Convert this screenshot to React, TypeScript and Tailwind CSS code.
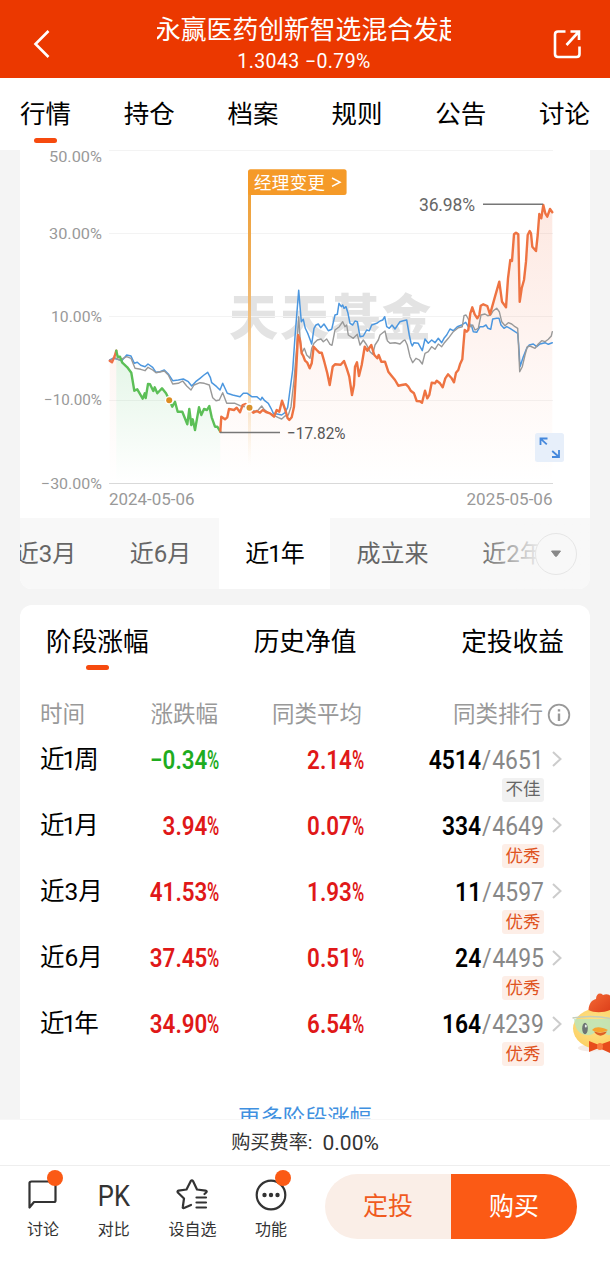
import { useState } from 'react'

const navTabs = ['行情', '持仓', '档案', '规则', '公告', '讨论']

const axisLabels = [
  { text: '50.00%', y: 162, x: 49 },
  { text: '30.00%', y: 238.5, x: 49 },
  { text: '10.00%', y: 321.5, x: 51 },
  { text: '−10.00%', y: 405, x: 44 },
  { text: '−30.00%', y: 488.5, x: 41 },
]

const periods = [
  { text: '近3月', box: 'w-[103px] -ml-[20px] pr-[12px]', narrow: false },
  { text: '近6月', box: 'w-[116px] pr-px', narrow: false },
  { text: '近1年', box: 'w-[111px]', narrow: true },
  { text: '成立来', box: 'w-[125px]', narrow: false },
  { text: '近2年', box: 'w-[116px]', narrow: false },
]

const stages = [
  { name: '近1周', change: '-0.34', avg: '2.14', rank: '4514', total: '4651', level: '不佳' },
  { name: '近1月', change: '3.94', avg: '0.07', rank: '334', total: '4649', level: '优秀' },
  { name: '近3月', change: '41.53', avg: '1.93', rank: '11', total: '4597', level: '优秀' },
  { name: '近6月', change: '37.45', avg: '0.51', rank: '24', total: '4495', level: '优秀' },
  { name: '近1年', change: '34.90', avg: '6.54', rank: '164', total: '4239', level: '优秀' },
]

// chart series, in chart viewBox units
const startLine = '109.7,360.7 112,362.3 114.7,356 116.3,350.7'

const greenLine =
  '116.3,350.7 117.7,356.7 120,356.7 122.3,362.7 127.3,367.3 131.3,372.7 134.3,390.7 137.3,389.3 142.7,398.7 144.7,393.3 145.7,398 148,384 150,384.3 153.3,391 154.7,387.3 157.3,393.3 162,388.3 166,393.3 169.3,400 172.3,406.7 175,401.7 177.7,411.7 182.3,411.7 187.3,424.3 189.3,409 191.3,425 192.7,419.3 195,430 199,407.3 201.3,415 204,409 207,410 209.3,406 211.7,417.3 215,426.7 217.3,426.7 220.3,431.7'

const fundLine =
  '220.3,431.7 221.3,416.7 225,419.3 227.3,417.3 229,409 234,410 236.7,407.7 240,412.3 242.7,405 245.3,404 249.3,407.7 253.3,412.7 256.7,411 260,412.7 262.7,410 266,412 270,413.3 274,416.7 276.7,410 279.3,411.7 282,400.7 285.3,410 287.7,418.3 289.3,420 291.7,417.3 294,406.7 296,373.3 298,335 300,340 301.7,353.3 303.3,356 305,360.7 307.3,362.7 309.7,368.3 311.7,363.3 313.7,346.7 316.7,350 319.3,352.7 321.7,352.7 324.3,361.7 327.3,373.3 329.7,385 332.7,366.7 335,364.3 340.7,364.7 344,361 346.7,368.3 349.3,376.7 352,395 354,385 355,366.7 357,362.3 359,376 361.7,365 364.7,346.7 367.3,350.7 371.3,345 374.3,355 377.3,358.3 378.7,355 381.3,361.7 385,361.7 388.3,371.7 391.7,376 395,380 398.3,385.7 401.7,385 406,384.3 408.3,386.7 410.7,390.7 414,393.3 416.7,401 420,401.3 422,402.7 425,390.7 427.3,398.3 429.3,395 431.7,382.7 435,383.3 436.7,380.7 440,383.3 442.7,387.3 445.3,378.3 448,374.3 451.7,378.3 454,382.3 456,372.7 458.3,370 460,364.3 462.3,359.3 463.3,346.7 464.7,330 466.7,331.7 468.3,330 470.3,313.3 472.3,307.3 474.7,314.3 477.3,318.3 479.3,315 480.7,305.7 483.3,304.3 487.3,306 490,314.3 491.7,308.3 495,296.7 499.3,281.7 502,301.7 506,307.3 508,278.3 510.3,260 512,261 514,234.3 516,232.7 518.3,234.3 519.7,301.7 521.7,288.3 524,280 526,261.7 527.7,235 529.7,231 531,233.3 532.3,246.7 536,251 537.7,235 539.3,214 541.3,218.3 543.3,205 545.3,213.3 547.3,216.7 550,209 552.3,212.3'

const blueLine =
  '109.7,360 113.3,358.3 117.7,359.3 121.7,360.7 126.7,355 131,356 134.3,363.3 137.3,362.3 140.7,365.3 145,366.7 148,364 152.7,367.3 156,372.3 160,371.7 164.3,370 168.3,374 172.7,380.7 178.3,380 183.3,379 188.3,381.7 191.7,386 195.7,381.7 200,378.3 204,375 207.7,372.3 210.3,377.3 211.7,382.7 216.7,386.7 220,390 222.7,383.3 227.3,393.3 232.7,395 240,396.7 243.3,393.3 247.3,393.3 251.7,396.7 256.7,396.7 260.7,400 262,397.3 264.7,400.7 268.3,403.3 271,408.3 273.3,413.3 278.3,414.3 281.7,415 285,412.7 287.7,407.3 290,390 292.7,370 295,336.7 298.7,290.3 301.3,321.7 303.3,319.3 305.3,328.3 307.7,333.3 311.7,344 314,328.3 316,325 318.3,324 320.7,327.7 324,324 328.3,330.7 331.7,329.3 335,315 337.3,314.3 339,303.3 341.3,306.7 342.7,305 344,308.3 346,306.7 348,313.3 350,323.3 352.7,325 355,321 357.3,321.7 360,336.7 363.3,336 366.7,330 369.3,330.7 371.7,325 376.7,323.3 380,321 382.7,320 384.7,316.7 386.7,326.7 389.3,328.3 392,325 395,329 400,321.7 403.3,320.7 406.7,320 409.3,335 411,343 412.3,346 414,342.7 418.3,343.3 422.3,350.7 425,339 428.3,343.3 431.7,340 435,342.7 438.3,338.3 441.7,342.7 444,338.3 446.7,335 450,329 453.3,330.7 457.3,326.7 461.7,325 465.7,322.3 468.3,326.7 471.3,325 473.3,331.7 476.7,332.3 480,326.7 483.3,326.7 486,325 488,328.3 490.7,329.3 492.7,319 496.7,318.3 499,318.3 501,325 504,328.3 506.7,326.7 510,328.3 515,331.7 517.7,333.3 518.7,345 520,366.7 523.3,356.7 526.7,348.3 529.3,345 533.3,344 536.7,346.7 540,344 545,342.7 548.3,344.3 552.3,342.7'

const grayLine =
  '109.7,360.7 115,358 120,360 126.7,356.7 131,358.3 135,368.3 140.7,369.3 145,370.7 148,367.3 152.7,370 156,372.7 164.3,371 168.3,375 172.7,384 178.3,383.3 182.7,381 186.7,386 191,390 194,385 200,382.7 204.3,383.3 209.3,385 212.7,397.7 216,400.7 219.3,400 222.7,392.7 226.7,403.3 235,403.3 240,405.7 245,406.7 251.7,410 256.7,411.7 261.7,406 264,409.3 268.3,412.7 273.3,415 278.3,417.7 281.7,419 285,416 288.3,415 291,406.7 294,380 296.7,346.7 298.7,316.7 300,336.7 301.7,353.3 304.3,348.3 306.7,355 310,358.3 311.7,348.3 314,343.3 317.3,340 321,339 323.3,341.7 326.7,339 330,344.3 332,345.3 335,330 337.3,328.3 339.3,326.7 342.7,321.7 345,326.7 346.7,325 348.3,335 353.3,338.3 357.3,334.3 360,345 363.3,340 366.7,345 370,351.7 372.7,354.3 375,345 378.3,340 380,335 385,331 387.3,340.7 390,343.3 395,342.7 400,344 403.3,340.7 405,340 407.3,345 410,356.7 412.7,362.7 416,358.3 419.3,360 422.3,364 425,353.3 428.3,351.7 431.7,346.7 435,349.3 438.3,344 441.7,346.7 444,343.3 448.3,338.3 453.3,331.7 458.3,327.7 462.3,326.7 464,315.7 466,315 468.3,319 470.7,326.7 472.7,325 475,330 478.3,328.3 481,315 485,314 487.7,315.7 490.7,315 493.3,310.7 496.7,308.3 499.3,311.7 501.7,321.7 505,325.7 508.3,322.7 511.7,324 515,326.7 517.7,328.3 519.7,371.7 522.3,366.7 525,355 527.3,346.7 530,346 535,348.3 538.3,344 541.7,340.7 545,341.7 548.3,339.3 551.3,336 552.3,331.7'

function TrendChart() {
  return (
    <svg viewBox="20 150 570 368" className="block h-[368px] w-full font-['Roboto','Noto_Sans_CJK_SC',sans-serif]">
      <defs>
        <linearGradient id="fundArea" gradientUnits="userSpaceOnUse" x1="0" y1="205" x2="0" y2="483">
          <stop offset="0" stopColor="#f2683a" stopOpacity="0.15" />
          <stop offset="0.6" stopColor="#f2683a" stopOpacity="0.055" />
          <stop offset="1" stopColor="#f2683a" stopOpacity="0" />
        </linearGradient>
        <linearGradient id="greenArea" gradientUnits="userSpaceOnUse" x1="0" y1="350" x2="0" y2="483">
          <stop offset="0" stopColor="#4fc064" stopOpacity="0.16" />
          <stop offset="1" stopColor="#4fc064" stopOpacity="0" />
        </linearGradient>
        <linearGradient id="managerLine" gradientUnits="userSpaceOnUse" x1="0" y1="180" x2="0" y2="465">
          <stop offset="0" stopColor="#ef9f33" />
          <stop offset="0.3" stopColor="#efad58" />
          <stop offset="0.75" stopColor="#f6d3a2" stopOpacity="0.8" />
          <stop offset="1" stopColor="#fae3c4" stopOpacity="0" />
        </linearGradient>
      </defs>

      {/* watermark */}
      <text x="229" y="335" fontSize="49" fontWeight="900" fill="#e3e3e3" textLength="202">天天基金</text>

      {[150.5, 233.5, 316.5, 400.5].map((y) => (
        <line key={y} x1="109" x2="553" y1={y} y2={y} stroke="#f3f3f3" />
      ))}
      <line x1="109" x2="553" y1="483.5" y2="483.5" stroke="#d9d9d9" />

      <polygon points={`109.7,483 ${startLine} 116.3,483`} fill="url(#fundArea)" />
      <polygon points={`116.3,483 ${greenLine} 220.3,483`} fill="url(#greenArea)" />
      <polygon points={`220.3,483 ${fundLine} 552.3,483`} fill="url(#fundArea)" />

      <rect x="248" y="180" width="3" height="285" fill="url(#managerLine)" />

      <g fill="none" strokeLinejoin="round" strokeLinecap="round">
        <polyline points={blueLine} stroke="#4c97df" strokeWidth="1.5" />
        <polyline points={grayLine} stroke="#999" strokeWidth="1.4" />
        <polyline points={startLine} stroke="#ee7048" strokeWidth="2.4" />
        <polyline points={greenLine} stroke="#5cbf57" strokeWidth="2.4" />
        <polyline points={fundLine} stroke="#ee7342" strokeWidth="2.4" />
      </g>

      <circle cx="169.2" cy="400.3" r="4.3" fill="#fff" />
      <circle cx="169.2" cy="400.3" r="3" fill="#dc8c22" />
      <circle cx="249.5" cy="407.7" r="4.8" fill="#fff" />
      <circle cx="249.5" cy="407.7" r="3" fill="#d8922b" />

      <path d="M220 432.5H280M483 204.2H543" stroke="#777" strokeWidth="1.6" />
      <text x="419" y="210.5" fontSize="17.5" fill="#666" textLength="56">36.98%</text>
      <text x="287" y="439" fontSize="17" fill="#555" textLength="58.5" lengthAdjust="spacingAndGlyphs">−17.82%</text>

      <rect x="248" y="169.3" width="98.6" height="25.6" rx="2.5" fill="#f59a28" />
      <text x="254" y="188.5" fontSize="17.5" fill="#fff" textLength="71">经理变更</text>
      <path d="M332 178l8 4.2l-8 4.2" fill="none" stroke="#fff" strokeWidth="1.5" />

      {axisLabels.map((l) => (
        <text key={l.text} x={l.x} y={l.y} fontSize="15.5" fill="#999" textLength={102 - l.x} lengthAdjust="spacingAndGlyphs">
          {l.text}
        </text>
      ))}
      <text x="109" y="505" fontSize="15.6" fill="#999" textLength="85.5" lengthAdjust="spacingAndGlyphs">2024-05-06</text>
      <text x="466.5" y="505" fontSize="15.6" fill="#999" textLength="86" lengthAdjust="spacingAndGlyphs">2025-05-06</text>

      {/* fullscreen button */}
      <rect x="535" y="433" width="29" height="29" rx="2.5" fill="#e7effa" />
      <path d="M540.5 445v-6.5h7M540.8 438.8l6 5.5M559 450v7h-7M558.7 456.7l-6.5-5.7" fill="none" stroke="#4588dc" strokeWidth="1.8" />
    </svg>
  )
}

function Mascot() {
  return (
    <svg viewBox="0 0 38 64" className="h-[64px] w-[38px]">
      <defs>
        <radialGradient id="chick" cx="0.45" cy="0.4" r="0.6">
          <stop offset="0" stopColor="#ffe58d" />
          <stop offset="1" stopColor="#fbcf62" />
        </radialGradient>
        <linearGradient id="comb" x1="0" y1="0" x2="1" y2="1">
          <stop offset="0" stopColor="#f56a35" />
          <stop offset="1" stopColor="#dc3f1a" />
        </linearGradient>
      </defs>
      <ellipse cx="20" cy="57" rx="14" ry="3.5" fill="#f3ebe6" />
      <ellipse cx="27" cy="37.5" rx="26" ry="20.5" fill="url(#chick)" />
      <path d="M16.5 19C17 12 20 9 24 8C24 3 28 1 31 4C35 2.500 38 4 38 5V19C31 22 22 22 16.5 19Z" fill="url(#comb)" />
      <path d="M2 28H38V44C34 45 32 40 28 40C22 40 22 45 14 44C7 43 3 38 2 28Z" fill="#b3e6c1" fillOpacity="0.75" />
      <path d="M0.5 27C10 25 26 24.5 38 27.5" fill="none" stroke="#c5cfbb" strokeWidth="1.5" />
      <ellipse cx="13" cy="37.5" rx="2.8" ry="5.8" fill="#6d7474" />
      <ellipse cx="13.8" cy="35" rx="1" ry="1.6" fill="#e9efec" />
      <path d="M20 39C24 35 29 36 36 39C32 42 24 42 20 39Z" fill="#f6a32e" />
      <path d="M22 40.5C26 42 30 42 35 40.5C32 46 25 46 22 40.5Z" fill="#de6126" />
      <path d="M17 50L27 54L38 50V62L27 57L17 61Z" fill="#e74c1c" />
      <ellipse cx="28" cy="55.5" rx="3" ry="3.5" fill="#f97a3d" />
    </svg>
  )
}

function Percent({ value, className }: { value: string, className: string }) {
  return (
    <span className={`origin-right scale-x-[0.86] pt-[10.5px] text-right text-[26px] leading-[36px] font-semibold whitespace-nowrap ${className}`}>
      {value.replace('-', '−')}
      <span className="-ml-[5px] inline-block origin-right scale-x-[0.74]">%</span>
    </span>
  )
}

function BottomItem({ label, dot, children }: { label: string, dot?: boolean, children: any }) {
  return (
    <div className="relative flex flex-col items-center">
      <div className="flex h-[32px] w-[32px] items-center justify-center">{children}</div>
      {dot && <span className="absolute top-[-9px] right-[-4px] h-4 w-4 rounded-full bg-[#fb5a15]" />}
      <span className="mt-[7px] text-[16px] leading-[24px] whitespace-nowrap">{label}</span>
    </div>
  )
}

export default function App() {
  const [tab, setTab] = useState('行情')
  const [period, setPeriod] = useState('近1年')

  return (
    <div className="relative flex h-[1263px] w-[610px] flex-col overflow-hidden bg-[#f4f4f4] font-['Roboto','Noto_Sans_CJK_SC',sans-serif] text-black">
      <header className="flex h-[78px] shrink-0 items-center justify-between bg-[#eb3800] px-[28px] pt-[10px] text-white">
        <svg viewBox="0 0 28 34" className="h-[34px] w-[28px]" fill="none" stroke="currentColor" strokeWidth="2.6">
          <path d="M20.5 4L7.5 17L20.5 30" />
        </svg>
        <div className="-mt-[3px] flex flex-col items-center">
          <h1 className="w-[294px] overflow-hidden text-[25.8px] leading-[36px] whitespace-nowrap">
            <span className="-ml-[2px]">永赢医药创新智选混合发起</span>
          </h1>
          <p className="mt-[2px] -mb-px text-[19.5px] leading-6 tracking-[0.4px]">1.3043 −0.79%</p>
        </div>
        <svg viewBox="0 0 30 34" className="h-[34px] w-[30px]" fill="none" stroke="currentColor" strokeWidth="2.6">
          <path d="M13.5 4.5H6Q3 4.5 3 7.5V27Q3 30 6 30H24.5Q27.5 30 27.5 27V19.5" />
          <path d="M14.5 18L26.5 5M18.5 4.5H27V13" />
        </svg>
      </header>

      <nav className="flex h-[72px] shrink-0 justify-between bg-white px-5">
        {navTabs.map((t) => (
          <button key={t} onClick={() => setTab(t)} className="flex flex-col items-center pt-[18px]">
            <span className="text-[25.5px] leading-[36px]">{t}</span>
            {t === tab && <span className="mt-[5.5px] h-[5px] w-[23px] rounded-full bg-[#f64a0e]" />}
          </button>
        ))}
      </nav>

      <main className="min-h-0 flex-1 overflow-hidden px-5">
        <section className="overflow-hidden rounded-b-xl bg-white">
          <TrendChart />
          <div className="relative flex h-[71px] overflow-hidden bg-[#f8f8f8] text-[24px]">
            {periods.map((p) => (
              <button
                key={p.text}
                onClick={() => setPeriod(p.text)}
                className={`flex shrink-0 items-center justify-center pt-px whitespace-nowrap ${p.box} ${p.narrow ? 'tracking-[-1px]' : ''} ${
                  p.text === period ? 'bg-white text-black' : 'text-[#666]'
                }`}
              >
                {p.text}
              </button>
            ))}
            {/* fade over the last period with the expand button */}
            <div className="absolute top-0 right-0 flex h-full w-[112px] items-center justify-end bg-gradient-to-r from-[#f8f8f8]/0 to-[#f8f8f8] to-60% pr-[13px]">
              <span className="flex h-[42px] w-[42px] items-center justify-center rounded-full border-[1.5px] border-[#e6e6e6] bg-[#f8f8f8]">
                <svg viewBox="0 0 12 8" className="h-[8px] w-[12px]">
                  <path d="M1.5 1H10.5L6.8 6Q6 7 5.2 6Z" fill="#888" stroke="#888" strokeLinejoin="round" />
                </svg>
              </span>
            </div>
          </div>
        </section>

        <section className="mt-4 h-[560px] rounded-t-xl bg-white">
          <div className="flex justify-between px-[26px] pt-[19px] text-[25.7px] leading-[36px]">
            <div className="flex flex-col items-center">
              <span>阶段涨幅</span>
              <span className="mt-[5px] h-[5px] w-[23px] rounded-full bg-[#f64a0e]" />
            </div>
            <span>历史净值</span>
            <span>定投收益</span>
          </div>

          <div className="mt-[29px] flex h-[32px] items-center pl-5 text-[22.5px] text-[#999]">
            <span className="w-[79px]">时间</span>
            <span className="w-[99px] text-right">涨跌幅</span>
            <span className="w-[144px] text-right">同类平均</span>
            <span className="w-[181px] text-right">同类排行</span>
            <svg viewBox="0 0 24 24" className="ml-[4px] h-6 w-6" fill="none" stroke="#999" strokeWidth="1.8">
              <circle cx="12" cy="12" r="10.3" />
              <path d="M12 10.5V18M12 6.3V8.5" strokeWidth="2.4" />
            </svg>
          </div>

          <div>
            {stages.map((s) => (
              <div key={s.name} className="flex h-[66.2px] items-start pl-5">
                <span className={`w-[80px] pt-[10.5px] text-[24.5px] leading-[36px] ${s.name.includes('1') ? 'tracking-[-2px]' : ''}`}>
                  {s.name}
                </span>
                <Percent value={s.change} className={s.change.startsWith('-') ? 'w-[99.5px] text-[#1fac1f]' : 'w-[99.5px] text-[#e01818]'} />
                <Percent value={s.avg} className="w-[144px] text-[#e01818]" />
                <div className="flex w-[180.5px] flex-col items-end">
                  <span className="origin-right scale-x-[0.88] pt-[10.5px] text-[26px] leading-[36px] whitespace-nowrap text-[#888]">
                    <b className="font-semibold text-black">{s.rank}</b>
                    <span className="mx-[1px]">/</span>
                    {s.total}
                  </span>
                  <span className={`flex h-[24px] w-[42px] items-center justify-center rounded-[3px] text-[17.5px] ${s.level === '不佳' ? 'bg-[#f1f1f1] text-[#666]' : 'bg-[#fdeee7] text-[#df5321]'}`}>
                    {s.level}
                  </span>
                </div>
                <svg viewBox="0 0 10 16" className="mt-[20px] ml-[8px] h-[16px] w-[10px]" fill="none" stroke="#ccc" strokeWidth="2">
                  <path d="M1 1L8.5 8L1 15" />
                </svg>
              </div>
            ))}
          </div>
          <p className="mt-[40px] text-center text-[22.3px] leading-[32px] text-[#3f90e0]">更多阶段涨幅</p>
        </section>
      </main>

      <div className="flex h-[46px] shrink-0 items-center justify-center border-t border-[#f7f7f7] bg-white pt-[2px] text-[19.2px] text-[#333]">
        <span>购买费率:</span>
        <span className="ml-[10px] text-[21px]">0.00%</span>
      </div>

      <footer className="flex h-[98px] shrink-0 items-start border-t border-[#eee] bg-white text-[#333]">
        <div className="flex w-[325px] gap-[38.7px] pt-[13px] pl-[27px]">
          <BottomItem label="讨论" dot>
            <svg viewBox="0 0 32 32" className="h-8 w-8" fill="none" stroke="currentColor" strokeWidth="2.2" strokeLinejoin="round">
              <path d="M4.5 2.5H27Q28.500 2.5 28.5 4V21.5Q28.5 23 27 23H7L2.500 28.500V4Q2.5 2.5 4.500 2.5Z" />
            </svg>
          </BottomItem>
          <BottomItem label="对比">
            <span className="scale-x-[0.85] pt-px text-[30px] leading-8">PK</span>
          </BottomItem>
          <BottomItem label="设自选">
            <svg viewBox="0 0 32 32" className="h-8 w-8" fill="none" stroke="currentColor" strokeWidth="2.2" strokeLinejoin="round" strokeLinecap="round">
              <path d="M15 26L8 29Q6.5 29.5 6.8 28L8 19.5L1.8 13.5Q1 12 2.5 11.7L10.5 10.500L14.800 2Q16 0.5 17 2L21 10.5L29.5 11.7Q31.5 12 30.2 13.5L28.5 15" />
              <path d="M20.5 18.5H30M20.5 23.5H30M20.5 28.5H30" />
            </svg>
          </BottomItem>
          <BottomItem label="功能" dot>
            <svg viewBox="0 0 32 32" className="h-8 w-8">
              <circle cx="16" cy="16" r="14.3" fill="none" stroke="currentColor" strokeWidth="2.2" />
              <g fill="currentColor">
                <circle cx="9.5" cy="16" r="2.2" />
                <circle cx="16" cy="16" r="2.2" />
                <circle cx="22.5" cy="16" r="2.2" />
              </g>
            </svg>
          </BottomItem>
        </div>
        <div className="mt-[8px] flex h-[65px] w-[252px] overflow-hidden rounded-full text-[25px]">
          <button className="w-1/2 bg-[#faeee7] text-[#f05a1e]">定投</button>
          <button className="w-1/2 bg-[#fb5a15] text-white">购买</button>
        </div>
      </footer>

      <div className="absolute top-[991px] right-0">
        <Mascot />
      </div>
    </div>
  )
}
